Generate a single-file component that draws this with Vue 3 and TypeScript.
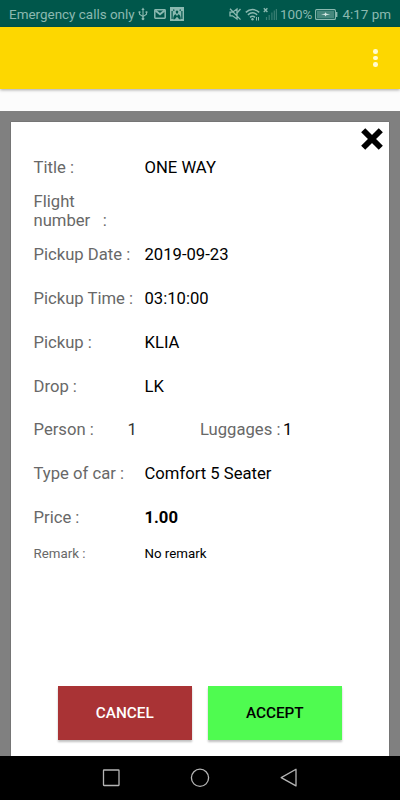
<script setup lang="ts">
interface Row {
  label: string
  value: string
  kind?: 'bold' | 'small'
}

const tripRows: Row[] = [
  { label: 'Title :', value: 'ONE WAY' },
  { label: 'Flight\nnumber \u00a0 :', value: '' },
  { label: 'Pickup Date :', value: '2019-09-23' },
  { label: 'Pickup Time :', value: '03:10:00' },
  { label: 'Pickup :', value: 'KLIA' },
  { label: 'Drop :', value: 'LK' },
]

const fareRows: Row[] = [
  { label: 'Type of car :', value: 'Comfort 5 Seater' },
  { label: 'Price :', value: '1.00', kind: 'bold' },
  { label: 'Remark :', value: 'No remark', kind: 'small' },
]
</script>

<template>
  <div class="screen">
    <header class="status">
      <span class="carrier">Emergency calls only</span>
      <svg class="usb" width="10" height="14" viewBox="0 0 10 14" fill="none" stroke="currentColor" stroke-width="1.1">
        <path d="M5 2v9M1.5 5v2.2L5 9.6l3.5-2.4V5" />
        <path d="M5 .5l1.6 2.4H3.4z" fill="currentColor" stroke="none" />
        <circle cx="5" cy="11.8" r="1.4" fill="currentColor" stroke="none" />
        <path d="M.6 4.2h1.8v1.8H.6zM7.6 4.2h1.8v1.8H7.6z" fill="currentColor" stroke="none" />
      </svg>
      <svg class="mail" width="12" height="10" viewBox="0 0 12 10" fill="none" stroke="currentColor">
        <rect x=".8" y=".8" width="10.4" height="8.4" rx=".6" stroke-width="1.5" />
        <path d="M1.4 1.4L6 5.2l4.6-3.8" stroke-width="1.9" />
      </svg>
      <svg class="app" width="14" height="14" viewBox="0 0 14 14">
        <rect width="14" height="14" fill="currentColor" />
        <g fill="#00574b">
          <path d="M1.500 4h1.200v8H1.500zM11.300 4h1.200v8h-1.200zM3 2.200l2 .8-1.600 1.200zM11 2.200l-2 .8 1.600 1.200z" />
          <path d="M5.600 4.600L7 3.200l1.400 1.400-.5 1.900H6.100z" />
          <path d="M3.200 12.300c0-3 1-4.600 2.400-5L7 9l1.400-1.700c1.400.4 2.400 2 2.400 5H9.200L7 9.800l-2.200 2.500z" />
        </g>
      </svg>
      <span class="spacer"></span>
      <svg class="mute" width="13" height="14" viewBox="0 0 13 14" fill="none" stroke="currentColor" stroke-width="1.3">
        <path d="M1 5.200h2.500L8 2v10L3.500 8.800H1zM1 1.800l10.500 10.800" />
        <path d="M8 6l3.500-4" />
      </svg>
      <svg class="wifi" width="15" height="13" viewBox="0 0 15 13" fill="none" stroke="currentColor" stroke-width="1.5">
        <path d="M.8 4.400c4-3.800 9.400-3.800 13.400 0M2.900 6.900c2.900-2.600 6.300-2.600 9.200 0M5 9.300c1.600-1.300 3.400-1.300 5 0" />
        <circle cx="7.500" cy="11.200" r="1.200" fill="currentColor" stroke="none" />
        <path d="M11.500 9v3.500M13.500 9v3.500" stroke-width="1" />
      </svg>
      <svg class="signal" width="14" height="14" viewBox="0 0 14 14" fill="none" stroke="currentColor">
        <path d="M.8 1.300l3.600 3.600M4.400 1.300L.8 4.900" stroke-width="1.400" />
        <path d="M3.500 10v3M6.200 8v5M8.900 5.500v7.500M11.300 3.500v9.500M13.400 2v11" opacity=".4" stroke-width="1.200" />
      </svg>
      <span class="percent">100%</span>
      <svg class="battery" width="23" height="11" viewBox="0 0 23 11">
        <rect x=".6" y=".6" width="19.800" height="9.800" rx="1" fill="none" stroke="currentColor" stroke-width="1.100" />
        <rect x="2" y="2" width="17" height="7" fill="currentColor" opacity=".5" />
        <path d="M6 5.300l3.700-.6.800-1.500 1 1.500 3.700.8-3.700.6-1 1.500-.8-1.500z" fill="#d5e8e4" />
        <path d="M21 3h1.400v5H21z" fill="currentColor" />
      </svg>
      <span class="clock">4:17 pm</span>
    </header>

    <div class="appbar">
      <button class="more" aria-label="More options"><i></i><i></i><i></i></button>
    </div>

    <main class="backdrop">
      <section class="card">
        <button class="close" aria-label="Close">
          <svg width="24" height="24" viewBox="0 0 24 24">
            <path d="M3.200 3.200l17.600 17.600M20.800 3.200L3.200 20.800" stroke="#000" stroke-width="5.800" />
          </svg>
        </button>
        <div v-for="row in tripRows" :key="row.label" class="row">
          <span class="label">{{ row.label }}</span>
          <span class="value">{{ row.value }}</span>
        </div>
        <div class="row counts">
          <span class="label">Person :</span>
          <span class="value persons">1</span>
          <span class="label">Luggages :</span>
          <span class="value">1</span>
        </div>
        <div v-for="row in fareRows" :key="row.label" class="row" :class="row.kind">
          <span class="label">{{ row.label }}</span>
          <span class="value">{{ row.value }}</span>
        </div>
        <div class="actions">
          <button class="btn cancel">CANCEL</button>
          <button class="btn accept">ACCEPT</button>
        </div>
      </section>
    </main>

    <nav class="navbar">
      <svg width="20" height="20" viewBox="0 0 20 20"><rect x="2.500" y="2" width="15.500" height="15.500" rx=".5" /></svg>
      <svg width="20" height="20" viewBox="0 0 20 20"><circle cx="10" cy="9.800" r="8.600" /></svg>
      <svg width="20" height="20" viewBox="0 0 20 20"><path d="M17 1.300v16.600L2.200 9.600z" stroke-linejoin="round" /></svg>
    </nav>
  </div>
</template>

<style>
body {
  margin: 0;
}
</style>

<style scoped>
.screen {
  width: 400px;
  height: 800px;
  display: flex;
  flex-direction: column;
  overflow: hidden;
  background: #fcfcfc;
  font-family: Roboto, "Liberation Sans", sans-serif;
}
button {
  border: 0;
  padding: 0;
  font-family: inherit;
}
svg {
  display: block;
  flex: none;
}
.status {
  height: 27px;
  box-sizing: border-box;
  flex: none;
  display: flex;
  align-items: center;
  padding: 1px 9px 0;
  background: #00574b;
  color: #8bb9b0;
  font-size: 13.450px;
  white-space: nowrap;
}
.usb { margin-left: 3px; }
.mail { margin-left: 6px; }
.app { margin-left: 4px; }
.spacer { flex: 1; }
.wifi { margin-left: 3px; }
.signal { margin-left: 3px; }
.percent { margin-left: 3px; }
.battery { margin-left: 3px; }
.clock { margin-left: 4px; }
.appbar {
  position: relative;
  height: 62px;
  flex: none;
  display: flex;
  align-items: center;
  justify-content: flex-end;
  background: #fdd700;
  box-shadow: 0 1px 3px rgba(0, 0, 0, 0.35);
}
.more {
  display: flex;
  flex-direction: column;
  gap: 2.200px;
  margin-right: 22px;
  background: none;
}
.more i {
  width: 4.600px;
  height: 4.600px;
  border-radius: 50%;
  background: #fffbd0;
}
.backdrop {
  flex: 1;
  display: flex;
  margin-top: 22px;
  padding: 11px 11px 0;
  background: #808080;
}
.card {
  position: relative;
  flex: 1;
  display: flex;
  flex-direction: column;
  box-sizing: border-box;
  padding: 23.400px 22.500px 16.500px;
  background: #fff;
  box-shadow: 0 0 1px rgba(0, 0, 0, 0.5);
}
.close {
  position: absolute;
  top: 5px;
  right: 5px;
  background: none;
}
.row {
  height: 43.800px;
  flex: none;
  display: grid;
  grid-template-columns: 111px 1fr;
  align-items: center;
  font-size: 16.650px;
  line-height: 19.500px;
}
.label {
  color: #686868;
  white-space: pre;
}
.value {
  color: #000;
}
.counts {
  grid-template-columns: 94px 72.500px 83px 1fr;
}
.persons {
  color: #333;
}
.bold .value {
  font-weight: 700;
}
.small {
  height: 29px;
  font-size: 13.300px;
}
.actions {
  display: flex;
  gap: 16.500px;
  margin: auto 25px 0 24.500px;
}
.btn {
  flex: 1;
  height: 53.500px;
  font-size: 15.300px;
  font-weight: 500;
  box-shadow: 0 2px 2px rgba(0, 0, 0, 0.25);
}
.cancel {
  background: #a93335;
  color: #fff;
}
.accept {
  background: #4ffb50;
  color: #000;
}
.navbar {
  height: 44px;
  flex: none;
  display: flex;
  align-items: center;
  justify-content: center;
  gap: 69px;
  background: #000;
}
.navbar svg {
  fill: none;
  stroke: #b5b5b5;
  stroke-width: 1.300;
}
</style>
